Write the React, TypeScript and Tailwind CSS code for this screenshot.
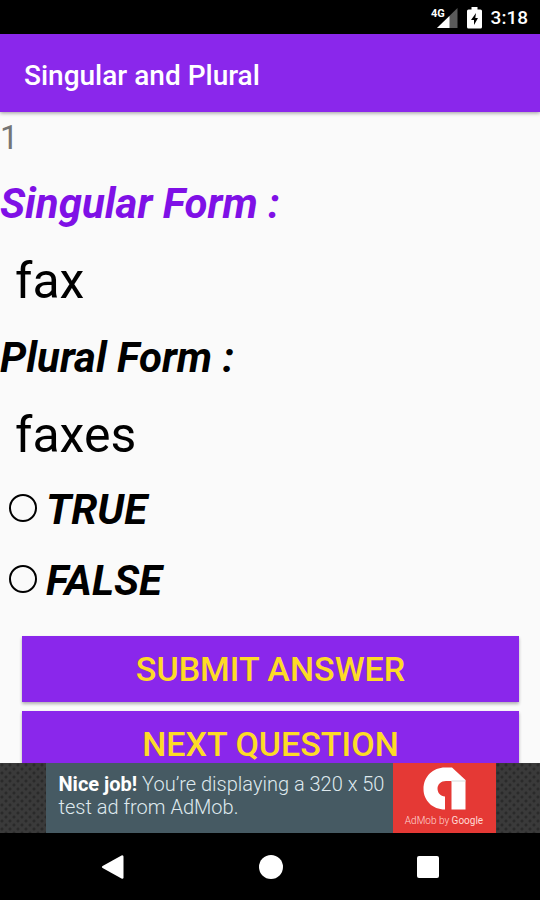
import { useState } from "react";

const answers = ["TRUE", "FALSE"];

function StatusBar() {
  return (
    <div className="flex h-[34px] shrink-0 items-center justify-end bg-black pt-0.5 pr-3 text-white">
      <svg className="mr-[9px] h-[22px] w-[28px]" viewBox="0 0 28 22" aria-label="4G signal">
        <path d="M7 21L27.500 1V21Z" fill="#5a5a5a" />
        <path d="M7 21L19.500 9V21Z" fill="#fff" />
        <text x="1" y="10" fontSize="11" fontWeight="700" fill="#fff" stroke="#000" strokeWidth="2" paintOrder="stroke" fontFamily="Roboto, sans-serif">4G</text>
      </svg>
      <svg className="mr-[9px] h-[22px] w-[15px]" viewBox="0 0 15 22" aria-label="Battery charging">
        <path d="M4.500 0h6v2.500h3a1.500 1.500 0 0 1 1.500 1.500v16a1.500 1.500 0 0 1-1.500 1.500h-12a1.500 1.500 0 0 1-1.500-1.500V4a1.500 1.500 0 0 1 1.500-1.500h3z" fill="#fff" />
        <path d="M9 6L4 13h3v5L11 11H8.300z" fill="#000" />
      </svg>
      <span className="text-[19px] font-medium">3:18</span>
    </div>
  );
}

function AdBanner() {
  return (
    <aside className="flex h-[70px] shrink-0 justify-center bg-[#3a3a3a] bg-[radial-gradient(circle_at_2px_2px,#2a2a2a_1px,transparent_2px),radial-gradient(circle_at_6px_6px,#2a2a2a_1px,transparent_2px)] bg-size-[8px_8px] pl-px">
      <a href="#ad" className="flex w-[450px]">
        <p className="flex-1 bg-[#465a63] pt-[10px] pl-[13px] text-[20px] leading-[23px] font-light whitespace-nowrap text-[#dfe9ee]">
          <b className="font-bold text-white">Nice job!</b> You’re displaying a 320 x 50
          <br />
          test ad from AdMob.
        </p>
        <div className="flex w-[103px] flex-col items-center bg-[#e53935] pt-1">
          <svg className="h-[43px] w-[43px]" viewBox="0 0 43 43" aria-hidden="true">
            <path d="M29 0.500L42.500 13V42.500H28.500V14H23C18 14 14.500 17.500 14.500 21.500C14.500 26 17.500 29 22 29.500V42.500C9.500 42.500 0.500 33.500 0.500 22C0.500 9.500 10 0.500 22 0.500Z" fill="#fff" />
            <path d="M28.500 14H42.500" stroke="#d5dcdc" strokeWidth="1" />
          </svg>
          <span className="mt-1 text-[10px] leading-[14px] font-light whitespace-nowrap text-[#ffd9d6]">
            AdMob by <span className="font-normal">Google</span>
          </span>
        </div>
      </a>
    </aside>
  );
}

function NavBar() {
  return (
    <nav className="flex h-[67px] shrink-0 items-center justify-around bg-black px-[34px]">
      <button aria-label="Back" className="p-3">
        <svg className="h-6 w-6" viewBox="0 0 24 24" fill="#fff">
          <path d="M1.600 11L20.500 0.400Q22.500 -0.300 22.500 1.800V22.200Q22.500 24.300 20.500 23.600L1.600 13Q0.200 12 1.600 11Z" />
        </svg>
      </button>
      <button aria-label="Home" className="p-3">
        <span className="block h-6 w-6 rounded-full bg-white" />
      </button>
      <button aria-label="Recent apps" className="p-3">
        <span className="block h-[22px] w-[22px] rounded-[2px] bg-white" />
      </button>
    </nav>
  );
}

function App() {
  const [answer, setAnswer] = useState("");

  return (
    <div className="flex h-screen flex-col bg-[#fafafa] font-[Roboto,sans-serif] text-black">
      <StatusBar />
      <header className="z-10 flex h-[78px] shrink-0 items-center bg-[#8a27eb] px-6 pt-[6px] shadow-[0_1px_4px_rgba(0,0,0,0.4)]">
        <h1 className="text-[28px] font-medium text-white">Singular and Plural</h1>
      </header>

      <main className="min-h-0 flex-1 overflow-hidden pt-px">
        <p className="mb-[10px] text-[33px] leading-[50px] text-[#757575]">1</p>
        <h2 className="text-[42px] leading-[62px] font-bold text-[#7f10e6] italic">Singular Form :</h2>
        <p className="pl-[15px] text-[50px] leading-[92px]">fax</p>
        <h2 className="text-[42px] leading-[62px] font-bold italic">Plural Form :</h2>
        <p className="pl-[15px] text-[50px] leading-[92px]">faxes</p>

        <div className="mb-[25px] flex flex-col gap-[11px]">
          {answers.map((item) => (
            <label key={item} className="flex h-[60px] items-center gap-[9px] pl-[9px] text-[42px] leading-[58px] font-bold italic first:-mt-px">
              <input
                type="radio"
                name="answer"
                value={item}
                checked={answer === item}
                onChange={() => setAnswer(item)}
                className="mb-1 h-7 w-7 appearance-none rounded-full border-2 border-black checked:bg-[#8a27eb]"
              />
              {item}
            </label>
          ))}
        </div>

        <div className="flex flex-col gap-[9px] pr-[21px] pl-[22px] text-[34px] font-medium text-[#fddb27]">
          <button className="h-[66px] bg-[#8a27eb] shadow-[0_2px_3px_rgba(0,0,0,0.3)]">SUBMIT ANSWER</button>
          <button className="h-[66px] bg-[#8a27eb] shadow-[0_2px_3px_rgba(0,0,0,0.3)]">NEXT QUESTION</button>
        </div>
      </main>

      <AdBanner />
      <NavBar />
    </div>
  );
}

export default App;
